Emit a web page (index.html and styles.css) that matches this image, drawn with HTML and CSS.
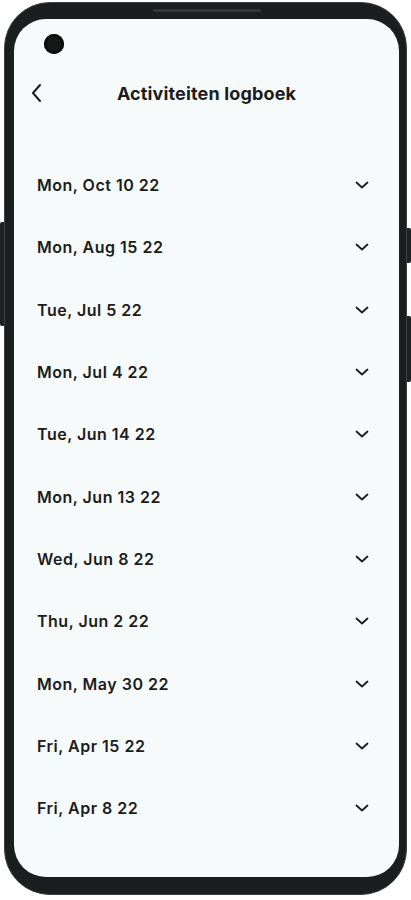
FILE: index.html
```html
<!DOCTYPE html>
<html lang="nl">
<head>
    <meta charset="UTF-8">
    <meta name="viewport" content="width=device-width, initial-scale=1.0">
    <title>Activiteiten logboek</title>
    <link rel="stylesheet" href="styles.css">
</head>
<body>
    <div class="phone">
        <div class="btn btn-left"></div>
        <div class="btn btn-right-1"></div>
        <div class="btn btn-right-2"></div>
        <div class="speaker"></div>
        <div class="screen">
            <div class="camera"></div>
            <header class="top-bar">
                <button class="back" aria-label="Terug">
                    <svg width="12" height="20" viewBox="0 0 12 20" fill="none" stroke="#1c1c1c" stroke-width="2" stroke-linecap="round" stroke-linejoin="round"><path d="M9 2 L2 10 L9 18"/></svg>
                </button>
                <h1 class="title">Activiteiten logboek</h1>
            </header>
            <ul class="log-list">
                <li class="log-row"><span>Mon, Oct 10 22</span><svg class="chev" width="14" height="8" viewBox="0 0 14 8"><path d="M1.5 1.5 L7 6.5 L12.5 1.5"/></svg></li>
                <li class="log-row"><span>Mon, Aug 15 22</span><svg class="chev" width="14" height="8" viewBox="0 0 14 8"><path d="M1.5 1.5 L7 6.5 L12.5 1.5"/></svg></li>
                <li class="log-row"><span>Tue, Jul 5 22</span><svg class="chev" width="14" height="8" viewBox="0 0 14 8"><path d="M1.5 1.5 L7 6.5 L12.5 1.5"/></svg></li>
                <li class="log-row"><span>Mon, Jul 4 22</span><svg class="chev" width="14" height="8" viewBox="0 0 14 8"><path d="M1.5 1.5 L7 6.5 L12.5 1.5"/></svg></li>
                <li class="log-row"><span>Tue, Jun 14 22</span><svg class="chev" width="14" height="8" viewBox="0 0 14 8"><path d="M1.5 1.5 L7 6.5 L12.5 1.5"/></svg></li>
                <li class="log-row"><span>Mon, Jun 13 22</span><svg class="chev" width="14" height="8" viewBox="0 0 14 8"><path d="M1.5 1.5 L7 6.5 L12.5 1.5"/></svg></li>
                <li class="log-row"><span>Wed, Jun 8 22</span><svg class="chev" width="14" height="8" viewBox="0 0 14 8"><path d="M1.5 1.5 L7 6.5 L12.5 1.5"/></svg></li>
                <li class="log-row"><span>Thu, Jun 2 22</span><svg class="chev" width="14" height="8" viewBox="0 0 14 8"><path d="M1.5 1.5 L7 6.5 L12.5 1.5"/></svg></li>
                <li class="log-row"><span>Mon, May 30 22</span><svg class="chev" width="14" height="8" viewBox="0 0 14 8"><path d="M1.5 1.5 L7 6.5 L12.5 1.5"/></svg></li>
                <li class="log-row"><span>Fri, Apr 15 22</span><svg class="chev" width="14" height="8" viewBox="0 0 14 8"><path d="M1.5 1.5 L7 6.5 L12.5 1.5"/></svg></li>
                <li class="log-row"><span>Fri, Apr 8 22</span><svg class="chev" width="14" height="8" viewBox="0 0 14 8"><path d="M1.5 1.5 L7 6.5 L12.5 1.5"/></svg></li>
            </ul>
        </div>
    </div>
</body>
</html>
```
FILE: styles.css
```css
body {
    margin: 0;
    background: #ffffff;
    font-family: Inter, "Noto Sans", sans-serif;
    color: #1c1c1c;
}

.phone {
    position: relative;
    box-sizing: border-box;
    width: 403px;
    height: 893px;
    margin: 2px 0 0 4px;
    padding: 16px 7px 17px 9px;
    background: #1b1e1e;
    border: 1px solid #3b4241;
    border-radius: 46px;
}

.btn {
    position: absolute;
    width: 4px;
    background: #1d2121;
}

.btn-left {
    left: -5px;
    top: 219px;
    height: 104px;
    border-radius: 2px 0 0 2px;
}

.btn-right-1 {
    right: -5px;
    top: 225px;
    height: 35px;
    border-radius: 0 2px 2px 0;
}

.btn-right-2 {
    right: -5px;
    top: 313px;
    height: 66px;
    border-radius: 0 2px 2px 0;
}

.speaker {
    position: absolute;
    top: 6px;
    left: 148px;
    width: 108px;
    height: 3px;
    border-radius: 2px;
    background: #323837;
}

.screen {
    position: relative;
    height: 100%;
    background: #f6fafb;
    border-radius: 32px;
    padding-top: 56px;
    box-sizing: border-box;
    overflow: hidden;
}

.camera {
    position: absolute;
    top: 15px;
    left: 30px;
    width: 20px;
    height: 20px;
    border-radius: 50%;
    background: #161818;
    box-shadow: inset 0 0 0 3px #0b0c0c;
}

.top-bar {
    position: relative;
    height: 36px;
    display: flex;
    align-items: center;
    justify-content: center;
}

.back {
    position: absolute;
    left: 17px;
    top: 8px;
    padding: 0;
    border: none;
    background: none;
    display: flex;
}

.title {
    margin: 0;
    font-size: 18px;
    font-weight: 700;
    letter-spacing: 0.15px;
}

.log-list {
    list-style: none;
    margin: 43px 0 0;
    padding: 0;
}

.log-row {
    height: 62.3px;
    display: flex;
    align-items: center;
    justify-content: space-between;
    padding: 0 30px 0 23px;
    font-size: 16px;
    font-weight: 600;
    letter-spacing: 0.5px;
}

.chev {
    fill: none;
    stroke: #1c1c1c;
    stroke-width: 1.8;
    stroke-linecap: round;
    stroke-linejoin: round;
}
```
